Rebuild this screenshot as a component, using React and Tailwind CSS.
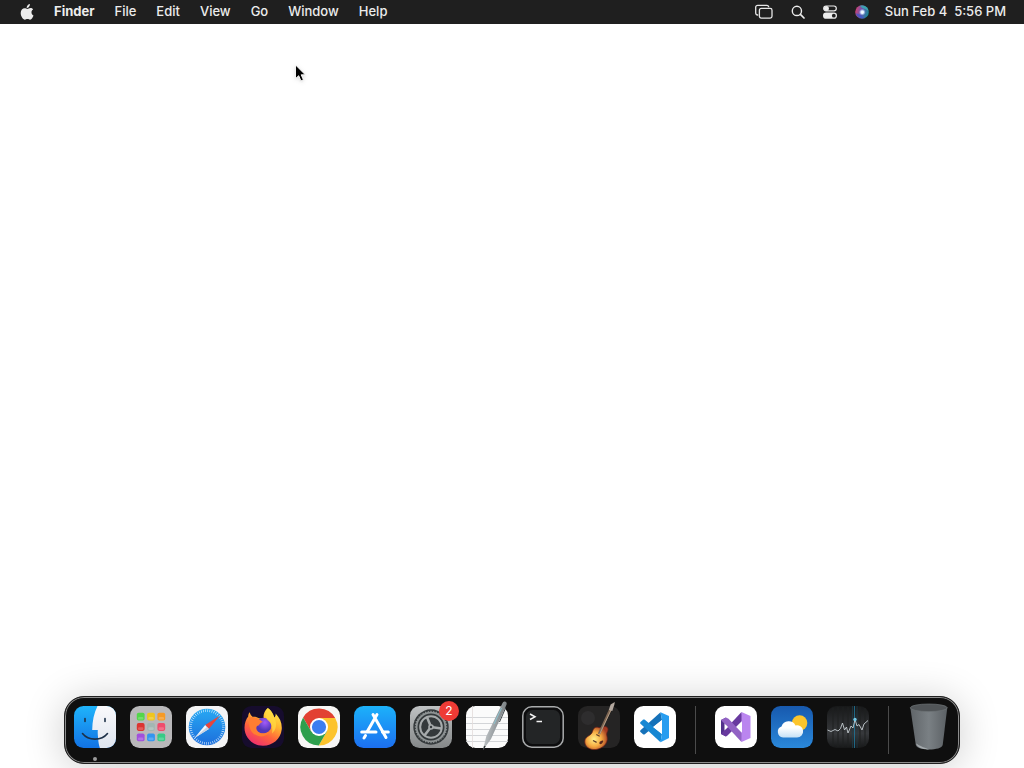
const menuItems = ["File", "Edit", "View", "Go", "Window", "Help"];

const AppleLogo = () => (
  <svg viewBox="0 0 14 16" className="h-4 w-3.5" fill="#ececec">
    <path d="M9.9 0C10 1.2 9.5 2.2 8.9 2.9C8.3 3.6 7.5 4 6.7 3.9C6.6 2.9 7.1 1.9 7.7 1.2C8.3 .5 9.2 .1 9.9 0Z" />
    <path d="M13.1 5.4C12 6.1 11.4 7.1 11.5 8.4C11.5 9.8 12.3 10.9 13.5 11.4C13 13 11.6 15.6 10.1 15.7C9.1 15.7 8.7 15.1 7.5 15.1C6.3 15.1 5.8 15.7 4.9 15.7C3 15.7 .7 12.2 .7 9C.7 6 2.6 4.2 4.6 4.2C5.8 4.2 6.6 4.9 7.4 4.9C8.2 4.9 9.1 4.1 10.5 4.1C11.5 4.1 12.5 4.6 13.1 5.4Z" />
  </svg>
);

const ScreensIcon = () => (
  <svg viewBox="0 0 18 16" className="h-4 w-[18px]" fill="none" stroke="#e6e6e6" strokeWidth="1.3">
    <path d="M3.2 11H2.6A1.9 1.9 0 0 1 .7 9.1V3.2A1.9 1.9 0 0 1 2.6 1.3H11.8A1.9 1.9 0 0 1 13.7 3.2" />
    <rect x="4.4" y="4.4" width="12.6" height="9.7" rx="1.8" />
  </svg>
);

const SearchIcon = () => (
  <svg viewBox="0 0 14 14" className="size-3.5" fill="none" stroke="#ececec" strokeLinecap="round">
    <circle cx="5.9" cy="5.9" r="4.6" strokeWidth="1.4" />
    <path d="M9.4 9.4L13 13" strokeWidth="1.7" />
  </svg>
);

const ControlCenterIcon = () => (
  <svg viewBox="0 0 14 14" className="size-3.5">
    <rect x=".7" y="1" width="12.6" height="4.9" rx="2.4" fill="none" stroke="#ececec" strokeWidth="1.2" />
    <circle cx="3.4" cy="3.5" r="2.5" fill="#ececec" />
    <rect y="7.6" width="14" height="6.2" rx="3.1" fill="#ececec" />
    <circle cx="10.8" cy="10.7" r="1.9" fill="#1f1f1f" />
  </svg>
);

const SiriIcon = () => (
  <svg viewBox="0 0 14 14" className="size-3.5">
    <defs>
      <linearGradient id="siriBase" x1="0" y1=".3" x2="1" y2=".6">
        <stop offset="0" stopColor="#d8406c" />
        <stop offset=".45" stopColor="#6a58b4" />
        <stop offset="1" stopColor="#178a94" />
      </linearGradient>
      <radialGradient id="siriGlow">
        <stop offset="0" stopColor="#fff" />
        <stop offset=".4" stopColor="#e6f3ff" />
        <stop offset="1" stopColor="#a9c8ff" stopOpacity="0" />
      </radialGradient>
    </defs>
    <circle cx="7" cy="7" r="6.8" fill="url(#siriBase)" />
    <path d="M5 .8C9 -.2 13 2 13.6 6C10 3 7 4 5 .8Z" fill="#35b3b0" opacity=".8" />
    <path d="M.6 8.5C3 13 7 14 10 13C7 12 6 9 .6 8.5Z" fill="#3f56c9" opacity=".8" />
    <circle cx="7.3" cy="7.2" r="3.4" fill="url(#siriGlow)" />
  </svg>
);

const Cursor = () => (
  <svg viewBox="0 0 13 18" className="absolute top-16 left-[294px] h-[18px] w-[13px] overflow-visible drop-shadow">
    <path
      d="M1.5 .9V14.6L4.7 11.7L7 16.9L9.4 15.8L7.2 10.8H11.3Z"
      fill="#000"
      stroke="#fff"
      strokeWidth=".9"
      strokeLinejoin="round"
    />
  </svg>
);

const Finder = () => (
  <>
    <defs>
      <linearGradient id="finderBlue" x1="0" y1="0" x2="0" y2="1">
        <stop offset="0" stopColor="#1fb4fb" />
        <stop offset="1" stopColor="#1272e4" />
      </linearGradient>
      <linearGradient id="finderWhite" x1="0" y1="0" x2="0" y2="1">
        <stop offset="0" stopColor="#fafafc" />
        <stop offset="1" stopColor="#dfe5ef" />
      </linearGradient>
    </defs>
    <rect width="42" height="42" rx="9.5" fill="url(#finderBlue)" />
    <path
      d="M23.5 0H32.5A9.5 9.5 0 0 1 42 9.5V32.5A9.5 9.5 0 0 1 32.5 42H25.9C24.9 39 24.3 36 24.2 32.5C23.8 29.5 23.6 27 23.8 24H18.2C18.3 15 20 7 23.5 0Z"
      fill="url(#finderWhite)"
    />
    <g fill="none" stroke="#1d3048" strokeLinecap="round" strokeWidth="1.6">
      <path d="M11 12.5V15.5M31 12.5V15.5" />
      <path d="M8.5 27.5C14.5 35 27.5 35 33.5 27.5" />
    </g>
  </>
);

const launchpadTiles = [
  ["#53d64a", "#efc51e", "#f69a25"],
  ["#dc3431", "#a3b7b3", "#ef4c6c"],
  ["#a150dc", "#3295f0", "#37cb86"],
];

const Launchpad = () => (
  <>
    <rect width="42" height="42" rx="9.5" fill="#b9b8ba" />
    {launchpadTiles.map((row, y) =>
      row.map((color, x) => (
        <g key={color}>
          <rect x={6.8 + x * 10.3} y={6.8 + y * 10.3} width="7.8" height="7.8" rx="1.8" fill={color} />
          <rect x={8 + x * 10.3} y={11 + y * 10.3} width="5.4" height="2.6" rx="1.2" fill="#fff" opacity=".2" />
        </g>
      ))
    )}
  </>
);

const Safari = () => (
  <>
    <defs>
      <linearGradient id="safariBlue" x1="0" y1="0" x2="0" y2="1">
        <stop offset="0" stopColor="#27a9f3" />
        <stop offset="1" stopColor="#1d6edc" />
      </linearGradient>
    </defs>
    <rect width="42" height="42" rx="9.5" fill="#f4f4f5" />
    <circle cx="21" cy="21" r="18.3" fill="url(#safariBlue)" />
    <circle cx="21" cy="21" r="16.4" fill="none" stroke="#e2f2ff" strokeWidth="2.6" strokeDasharray=".6 1.546" />
    <path d="M34 9.5L19.2 18.9L22.8 23.1Z" fill="#e8453c" />
    <path d="M8.5 32L19.2 18.9L22.8 23.1Z" fill="#f4f6fa" />
    <path d="M8.5 32L21 21L22.8 23.1Z" fill="#c8d3e2" />
  </>
);

const Firefox = () => (
  <>
    <defs>
      <linearGradient id="foxFlame" x1=".8" y1="0" x2=".25" y2="1">
        <stop offset="0" stopColor="#fff04c" />
        <stop offset=".35" stopColor="#ffb52f" />
        <stop offset=".65" stopColor="#ff633c" />
        <stop offset="1" stopColor="#ed2b73" />
      </linearGradient>
      <radialGradient id="foxGlobe" cx=".6" cy=".3">
        <stop offset="0" stopColor="#a35bfa" />
        <stop offset="1" stopColor="#5237b8" />
      </radialGradient>
    </defs>
    <rect width="42" height="42" rx="9.5" fill="#160c2d" />
    <path
      d="M25.8 2C29 4 31 7.5 32.3 11.5C33.5 10.5 33.8 8.8 33.6 7.5C38 12 40.3 17.5 39.7 23.5C38.7 33 30.8 39.7 21 39.7C10.5 39.7 2.5 31.5 2.5 21.8C2.5 16.8 4.2 13 6.2 10.5C6.2 8.7 6.8 7.3 7.8 6.3C8.1 8 9 9.7 10.5 10.8C12.8 10.5 15.2 11 17 12.3C18.5 12.2 20.5 12.1 21.7 12.3C21 9 22.5 4.5 25.8 2Z"
      fill="url(#foxFlame)"
    />
    <circle cx="21.3" cy="19.8" r="8" fill="url(#foxGlobe)" />
    <path
      d="M7 11.5C12 9.5 17 13 20.8 16C18.3 16.5 17.6 18.3 16.6 19.6C14.5 19.5 13.8 22 14.8 24.2C16 26.5 19 27.6 22.5 27.2C25 27 27 25.6 28.3 23.6C27.8 28.5 22 31.5 16.5 30C9 28 6 21 7 11.5Z"
      fill="#ff7e31"
    />
    <path
      d="M25.8 2C29 4 31 7.5 32.5 12C35.5 18 34 24 30 27.5C31 23 30 17.5 26.5 15C23.5 12.5 21.8 7 25.8 2Z"
      fill="#ffdc42"
      opacity=".7"
    />
  </>
);

// one blade of the wheel, turned three times round the centre
const chromeBlade = "M37.2 12A18.5 18.5 0 0 0 5.1 11.5L13.2 25.5L21 21V12Z";

const Chrome = () => (
  <>
    <rect width="42" height="42" rx="9.5" fill="#f7f6f5" />
    <path d={chromeBlade} fill="#e24132" />
    <path d={chromeBlade} fill="#fcc32c" transform="rotate(120 21 21)" />
    <path d={chromeBlade} fill="#2e9f4d" transform="rotate(240 21 21)" />
    <circle cx="21" cy="21" r="9" fill="#fff" />
    <circle cx="21" cy="21" r="7.1" fill="#3c7df0" />
  </>
);

const AppStore = () => (
  <>
    <defs>
      <linearGradient id="storeBlue" x1="0" y1="0" x2="0" y2="1">
        <stop offset="0" stopColor="#1cb2fa" />
        <stop offset="1" stopColor="#1c6ff0" />
      </linearGradient>
    </defs>
    <rect width="42" height="42" rx="9.5" fill="url(#storeBlue)" />
    <g stroke="#fff" strokeWidth="3" strokeLinecap="round" fill="none">
      <path d="M23 8.5L13.3 25.5M19 8.5L32 31.5" />
      <path d="M7.7 26H22M28.5 26H34.3M11.5 29.5L10 32" />
    </g>
  </>
);

const teeth = Array.from({ length: 36 }, (_, i) => i * 10);

const Settings = () => (
  <>
    <defs>
      <linearGradient id="settingsGray" x1="0" y1="0" x2="0" y2="1">
        <stop offset="0" stopColor="#bfc2c3" />
        <stop offset="1" stopColor="#858889" />
      </linearGradient>
    </defs>
    <rect width="42" height="42" rx="9.5" fill="url(#settingsGray)" />
    <circle cx="21" cy="21" r="17.7" fill="#34393b" />
    <circle cx="21" cy="21" r="14.4" fill="none" stroke="#8f9495" strokeWidth="1.8" />
    {teeth.map((angle) => (
      <path key={angle} d="M21 4.8V6.2" stroke="#8f9495" strokeWidth="1.2" transform={`rotate(${angle} 21 21)`} />
    ))}
    <circle cx="21" cy="21" r="10.8" fill="none" stroke="#a7abac" strokeWidth="2" />
    <g transform="rotate(8 21 21)" stroke="#a7abac" strokeWidth="2.6">
      <path d="M21 21L15.8 12M21 21H31.4M21 21L15.8 30" />
    </g>
    <circle cx="21" cy="21" r="2.8" fill="#a7abac" />
    <circle cx="21" cy="21" r="1.2" fill="#34393b" />
  </>
);

const TextEdit = () => (
  <>
    <defs>
      <linearGradient id="penBody" x1="0" y1="0" x2="1" y2=".4">
        <stop offset="0" stopColor="#dfe3e4" />
        <stop offset=".5" stopColor="#a8adb0" />
        <stop offset="1" stopColor="#6b7174" />
      </linearGradient>
    </defs>
    <rect width="42" height="42" rx="9.5" fill="#fbfbfb" />
    <path d="M0 11.5H42M0 17.5H42M0 23.5H42M0 29.5H42M0 35.5H42" stroke="#c9cccf" strokeWidth=".8" />
    <path d="M6.5 0V42" stroke="#e3dcda" strokeWidth=".8" />
    <path
      d="M36.3 -2.5C37 -4.3 38.3 -5 39.5 -4.3C40.8 -3.7 41 -2.5 40.4 -1L25 33L17 44L20.2 30.5Z"
      fill="url(#penBody)"
    />
    <path d="M35.5 2L28 18" stroke="#8bc3d0" strokeWidth="1" />
    <path d="M39.8 1.5L33.5 16" stroke="#41484b" strokeWidth="1" />
    <path d="M17 44L18 39.7L19.8 40.5Z" fill="#303436" />
  </>
);

const Terminal = () => (
  <>
    <rect x=".8" y=".8" width="40.4" height="40.4" rx="9" fill="#0d0d0e" stroke="#a9abac" strokeWidth="1.5" />
    <rect x="4" y="4" width="34" height="34" rx="6.5" fill="#232526" />
    <path d="M8 8L13 10.8L8 13.5M14.5 15.5H20" fill="none" stroke="#f4f4f4" strokeWidth="1.5" />
  </>
);

const GarageBand = () => (
  <>
    <defs>
      <radialGradient id="guitarBody" cx=".4" cy=".55" r=".62">
        <stop offset="0" stopColor="#fff08a" />
        <stop offset=".5" stopColor="#f6ac43" />
        <stop offset="1" stopColor="#a33a22" />
      </radialGradient>
    </defs>
    <rect width="42" height="42" rx="9.5" fill="#252424" />
    <circle cx="10" cy="12" r="7" fill="#2e2d2e" />
    <path
      d="M14.5 25.5C15.5 22 17.5 20.5 20.5 21.5C23 22.5 24.5 20.5 27 20.5C30.5 21 30.5 24 29 26.5C28 28.5 29.5 30.5 29.3 33.5C28.5 39 24 42.5 18 43.5C12 44.2 6.5 41 6.8 35C7.2 30 13.5 30 14.5 25.5Z"
      fill="url(#guitarBody)"
      stroke="#6e2018"
      strokeWidth=".7"
    />
    <path d="M21 28L32.3 3.5" stroke="#7d6552" strokeWidth="2.5" />
    <path d="M21.7 28L33 4" stroke="#cdb89e" strokeWidth=".7" />
    <path d="M30.8 4L32.6 -1.5L36.8 -4L36.4 -1.5L34.3 5Z" fill="#b3a89f" />
    <path d="M21.5 36C23 34.5 25.5 33.5 25.2 35.5C24.5 37.5 23 38.5 21.5 38Z" fill="#5a2a1f" />
    <path d="M18.3 28.5L21.7 30.2M15 34.5L18.6 36.4" stroke="#5e3c28" strokeWidth="1.2" />
  </>
);

const VSCode = () => (
  <>
    <rect width="42" height="42" rx="9.5" fill="#fff" />
    <path
      d="M26.5 6.3L28 14L10.8 28.3C10.3 28.7 9.6 28.7 9 28.3L6.5 26C6 25.5 6 24.7 6.5 24.2Z"
      fill="#1571b9"
    />
    <path
      d="M6.5 17.8C6 17.3 6 16.5 6.5 16L9 13.7C9.6 13.3 10.3 13.3 10.8 13.7L28 28L26.5 36.2Z"
      fill="#1687d3"
    />
    <path d="M26.5 6.3L35 10V32L26.5 36.2L28 28V14Z" fill="#279df0" />
    <path d="M28 14V28L19 21Z" fill="#fff" />
  </>
);

const VisualStudio = () => (
  <>
    <rect width="42" height="42" rx="9.5" fill="#fff" />
    <path d="M6 14L11 11.5V30.5L6 28Z" fill="#52308c" />
    <path d="M26.5 6L28 14L12.5 29.5L11 30.5L6 28Z" fill="#68399f" />
    <path d="M6 14L11 11.5L13.5 12.8L28 28L26.5 36Z" fill="#9262c4" />
    <path d="M26.5 6L35.5 10V32L26.5 36V27V15Z" fill="#ba85ef" />
    <path d="M27 15.5V26.5L21.5 21Z" fill="#fff" />
    <path d="M9.5 17.5V24.5L13 21Z" fill="#fff" />
  </>
);

const Weather = () => (
  <>
    <defs>
      <linearGradient id="weatherSky" x1="0" y1="0" x2="0" y2="1">
        <stop offset="0" stopColor="#1759ae" />
        <stop offset="1" stopColor="#2a88da" />
      </linearGradient>
      <linearGradient id="weatherCloud" x1="0" y1="0" x2="0" y2="1">
        <stop offset=".4" stopColor="#fff" />
        <stop offset="1" stopColor="#c6e1f6" />
      </linearGradient>
    </defs>
    <rect width="42" height="42" rx="9.5" fill="url(#weatherSky)" />
    <circle cx="28.6" cy="17" r="7.7" fill="#fcc52d" />
    <path
      d="M12 31.5A5.7 5.7 0 0 1 10.5 20.5A7.6 7.6 0 0 1 24.5 19.5A6.1 6.1 0 1 1 26 31.5Z"
      fill="url(#weatherCloud)"
    />
  </>
);

const Activity = () => (
  <>
    <defs>
      <linearGradient id="activityBack" x1="0" y1="0" x2="0" y2="1">
        <stop offset="0" stopColor="#171819" />
        <stop offset=".65" stopColor="#37393c" />
        <stop offset="1" stopColor="#171819" />
      </linearGradient>
    </defs>
    <rect width="42" height="42" rx="9.5" fill="url(#activityBack)" />
    <path d="M6 2V40M11 1V41M16 1V41M21 1V41M33 1V41M38 2V40" stroke="#1e2021" strokeWidth="1" />
    <path d="M25.5 0V42M30 0V42" stroke="#1d3d4b" strokeWidth=".7" />
    <path d="M27.5 0V42" stroke="#1e7aa0" strokeWidth=".8" />
    <path
      d="M.5 24L4 25.5L8 23.5L11 25L13.500 22.5L15.5 17L17.5 24L19.5 21L21 27L24 20L26 22L28 13.5L30 20L32 18.5L35 24L37 18L41 14.5"
      fill="none"
      stroke="#c5cdd1"
      strokeWidth=".9"
    />
    <circle cx="28" cy="13.5" r="1.7" fill="#74c9e8" />
  </>
);

const Trash = () => (
  <>
    <defs>
      <linearGradient id="trashSide" x1="0" y1="0" x2="1" y2="0">
        <stop offset="0" stopColor="#606569" />
        <stop offset=".5" stopColor="#7a8084" />
        <stop offset="1" stopColor="#5b6064" />
      </linearGradient>
    </defs>
    <path d="M2.3 1.5L7.8 39C9 45 33.5 45 34.7 39L39.3 1.5Z" fill="url(#trashSide)" />
    <ellipse cx="20.8" cy="1.8" rx="18.5" ry="3.8" fill="#515558" stroke="#6d7376" strokeWidth=".7" />
    <path d="M8 37.5C10 42.5 16 43.5 21 43.4C15 41 12 40 8 37.5Z" fill="#a4aaad" />
  </>
);

const apps = [
  { name: "Finder", Icon: Finder, running: true },
  { name: "Launchpad", Icon: Launchpad },
  { name: "Safari", Icon: Safari },
  { name: "Firefox", Icon: Firefox },
  { name: "Google Chrome", Icon: Chrome },
  { name: "App Store", Icon: AppStore },
  { name: "System Settings", Icon: Settings, badge: 2 },
  { name: "TextEdit", Icon: TextEdit },
  { name: "Terminal", Icon: Terminal },
  { name: "GarageBand", Icon: GarageBand },
  { name: "Visual Studio Code", Icon: VSCode },
];

const recentApps = [
  { name: "Visual Studio", Icon: VisualStudio },
  { name: "Weather", Icon: Weather },
  { name: "Activity Monitor", Icon: Activity },
];

const DockItem = ({ name, Icon, badge, running }) => (
  <button className="relative size-[42px]" aria-label={name}>
    <svg viewBox="0 0 42 42" className="size-[42px] overflow-visible">
      <Icon />
    </svg>
    {badge && (
      <span className="absolute -top-[5px] -right-[7px] flex size-5 items-center justify-center rounded-full bg-[#ee3b35] text-xs text-white">
        {badge}
      </span>
    )}
    {running && (
      <span className="absolute -bottom-[13px] left-[19px] size-1 rounded-full bg-[#9b9b9b]" />
    )}
  </button>
);

const Divider = () => <div className="h-12 w-px bg-[#4b4b4b]" />;

const MenuBar = () => (
  <header className="flex h-6 items-center justify-between bg-[#1f1f1f] pr-[18px] pl-5 text-[13px] font-medium text-[#ececec]">
    <nav className="flex items-center gap-5">
      <button aria-label="Apple menu">
        <AppleLogo />
      </button>
      <button className="font-bold">Finder</button>
      {menuItems.map((item) => (
        <button key={item}>{item}</button>
      ))}
    </nav>
    <div className="flex items-center gap-4">
      <div className="flex items-center gap-[18px]">
        <button aria-label="Screen Mirroring">
          <ScreensIcon />
        </button>
        <button aria-label="Spotlight">
          <SearchIcon />
        </button>
        <button aria-label="Control Center">
          <ControlCenterIcon />
        </button>
        <button aria-label="Siri">
          <SiriIcon />
        </button>
      </div>
      <button className="whitespace-pre">Sun Feb 4  5:56 PM</button>
    </div>
  </header>
);

const Dock = () => (
  <footer className="mx-auto mb-1 flex gap-[19px] rounded-[20px] border border-[#202020] bg-[#0f0f0f] px-[9px] pt-[9px] pb-2 shadow-[0_4px_40px_rgba(0,0,0,0.2)] ring-1 ring-[#8c8c8c] ring-inset">
    <div className="flex gap-3.5 pb-[7px]">
      {apps.map((app) => (
        <DockItem key={app.name} {...app} />
      ))}
    </div>
    <Divider />
    <div className="flex gap-3.5">
      {recentApps.map((app) => (
        <DockItem key={app.name} {...app} />
      ))}
    </div>
    <Divider />
    <DockItem name="Trash" Icon={Trash} />
  </footer>
);

const App = () => {
  return (
    <div className="relative flex min-h-screen flex-col overflow-hidden bg-white font-['Inter',sans-serif] [&_svg]:block">
      <MenuBar />
      <main className="flex-1" />
      <Dock />
      <Cursor />
    </div>
  );
};

export default App;
